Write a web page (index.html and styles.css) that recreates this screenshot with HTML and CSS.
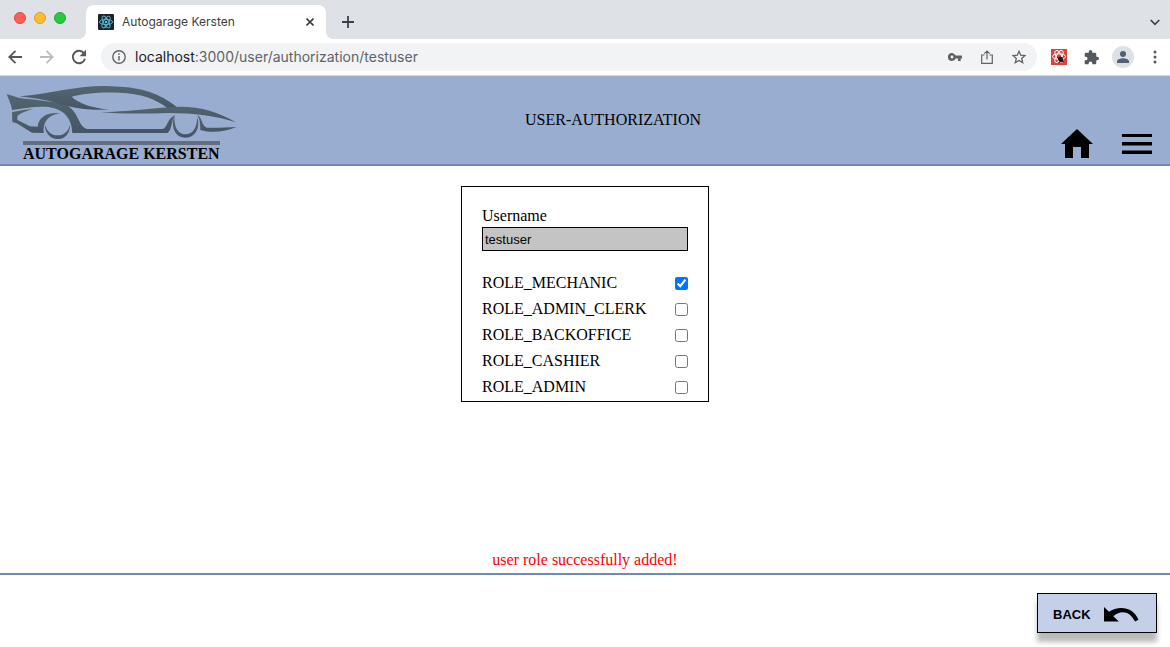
FILE: index.html
```html
<!DOCTYPE html>
<html lang="en">
<head>
<meta charset="utf-8">
<title>Autogarage Kersten</title>
<link rel="stylesheet" href="styles.css">
</head>
<body>
<div class="browser">
  <div class="tabstrip">
    <div class="lights"><span class="light red"></span><span class="light amber"></span><span class="light green"></span></div>
    <div class="tab">
      <svg class="favicon" width="16" height="16" viewBox="0 0 16 16"><rect width="16" height="16" rx="1" fill="#20232a"/><g fill="none" stroke="#53c1de" stroke-width=".9"><ellipse cx="8" cy="8" rx="6.6" ry="2.6"/><ellipse cx="8" cy="8" rx="6.6" ry="2.6" transform="rotate(60 8 8)"/><ellipse cx="8" cy="8" rx="6.6" ry="2.6" transform="rotate(120 8 8)"/></g><circle cx="8" cy="8" r="1.3" fill="#53c1de"/></svg>
      <span class="tab-title">Autogarage Kersten</span>
      <button class="icon-btn" aria-label="Close tab"><svg width="8" height="8" viewBox="0 0 8 8"><path d="M.5.5l7 7M7.500.5l-7 7" stroke="#3c4043" stroke-width="1.6"/></svg></button>
    </div>
    <button class="icon-btn new-tab" aria-label="New tab"><svg width="12" height="12" viewBox="0 0 12 12"><path d="M6 0v12M0 6h12" stroke="#3c4043" stroke-width="1.8"/></svg></button>
    <button class="icon-btn" aria-label="Search tabs"><svg width="10" height="7" viewBox="0 0 10 7"><path d="M.7 1l4.300 4.300L9.300 1" fill="none" stroke="#3c4043" stroke-width="1.7"/></svg></button>
  </div>
  <div class="toolbar">
    <div class="tools nav-buttons">
      <button class="icon-btn" aria-label="Back"><svg width="14" height="14" viewBox="0 0 14 14"><path d="M14 7H1.500M7.500.8L1.300 7l6.200 6.200" fill="none" stroke="#54585d" stroke-width="1.8"/></svg></button>
      <button class="icon-btn" aria-label="Forward"><svg width="14" height="14" viewBox="0 0 14 14"><path d="M0 7h12.500M6.500.8L12.700 7l-6.200 6.200" fill="none" stroke="#babcbe" stroke-width="1.8"/></svg></button>
      <button class="icon-btn" aria-label="Reload"><svg width="16" height="16" viewBox="0 0 16 16"><path d="M13.200 4.500A6.200 6.200 0 1 0 14 9.800" fill="none" stroke="#54585d" stroke-width="1.900"/><path d="M15 .8v6.400H8.600z" fill="#54585d"/></svg></button>
    </div>
    <div class="omnibox">
      <svg width="14" height="14" viewBox="0 0 14 14"><circle cx="7" cy="7" r="6.200" fill="none" stroke="#5f6368" stroke-width="1.400"/><path d="M7 6v4.500M7 3.300v1.500" stroke="#5f6368" stroke-width="1.500"/></svg>
      <div class="url"><span class="host">localhost</span>:3000/user/authorization/testuser</div>
      <div class="tools">
        <button class="icon-btn" aria-label="Passwords"><svg width="14" height="8" viewBox="0 0 14 8"><path fill="#5f6368" fill-rule="evenodd" d="M7.600 2.600A4 4 0 1 0 7.600 5.400H10V8h2.700V5.400H14V2.600zM4 2.600a1.400 1.400 0 1 1 0 2.800 1.400 1.400 0 0 1 0-2.800z"/></svg></button>
        <button class="icon-btn" aria-label="Share"><svg width="12" height="14" viewBox="0 0 12 14"><path d="M3.500 5H.7v8.300h10.600V5H8.500M6 9.500V1.500M3.300 3.700L6 1l2.700 2.700" fill="none" stroke="#5f6368" stroke-width="1.200"/></svg></button>
        <button class="icon-btn" aria-label="Bookmark"><svg width="14" height="14" viewBox="0 0 14 14"><path d="M7 1.300l1.700 3.900 4.200.4-3.200 2.800 1 4.200L7 10.400l-3.700 2.200 1-4.200L1.100 5.600l4.200-.4z" fill="none" stroke="#5f6368" stroke-width="1.300"/></svg></button>
      </div>
    </div>
    <div class="tools extensions">
      <button class="icon-btn" aria-label="React tools"><svg width="16" height="16" viewBox="0 0 16 16"><rect width="16" height="16" fill="#d9453a"/><g fill="none" stroke="#fff" stroke-width="1"><ellipse cx="8" cy="7.500" rx="6.500" ry="2.700"/><ellipse cx="8" cy="7.500" rx="6.500" ry="2.700" transform="rotate(60 8 7.500)"/><ellipse cx="8" cy="7.500" rx="6.500" ry="2.700" transform="rotate(120 8 7.500)"/></g><ellipse cx="9.700" cy="10.500" rx="2.300" ry="3.200" fill="#271715" transform="rotate(-35 9.700 10.500)"/><path d="M6 8l7 5M12 8l-4 6" stroke="#271715" stroke-width=".8"/></svg></button>
      <button class="icon-btn" aria-label="Extensions"><svg width="15" height="15" viewBox="1 1 22 22"><path fill="#54585d" d="M20.500 11H19V7c0-1.100-.9-2-2-2h-4V3.500a2.500 2.500 0 0 0-5 0V5H4c-1.100 0-2 .9-2 2v3.800h1.500a2.700 2.700 0 0 1 0 5.400H2V20c0 1.100.9 2 2 2h3.800v-1.500a2.700 2.700 0 0 1 5.400 0V22H17c1.100 0 2-.9 2-2v-4h1.500a2.500 2.500 0 0 0 0-5z"/></svg></button>
      <button class="icon-btn" aria-label="Profile"><svg width="22" height="22" viewBox="0 0 22 22"><circle cx="11" cy="11" r="11" fill="#dde1e6"/><circle cx="11" cy="8" r="3" fill="#535f75"/><path d="M5 17v-1.500c0-2.200 3.500-3.300 6-3.300s6 1.100 6 3.300V17z" fill="#535f75"/></svg></button>
      <button class="icon-btn" aria-label="Menu"><svg width="4" height="14" viewBox="0 0 4 14"><g fill="#54585d"><circle cx="2" cy="2" r="1.500"/><circle cx="2" cy="7" r="1.500"/><circle cx="2" cy="12" r="1.500"/></g></svg></button>
    </div>
  </div>
</div>

<header class="header">
  <div class="logo">
    <svg class="car" width="245" height="65" viewBox="0 0 735 195">
      <defs><linearGradient id="steel" x1="0" y1="0" x2="0" y2="1"><stop offset="0" stop-color="#53666f"/><stop offset="1" stop-color="#465566"/></linearGradient></defs>
      <g fill="url(#steel)">
        <path d="M20 54L58 66C105 72 160 75 192 85C238 102 230 147 260 159L488 159C502 158 500 128 525 118C513 134 517 160 503 171L217 171C215 130 196 96 135 92C88 92 65 98 36 102C34 84 26 72 20 54Z"/>
        <path d="M36 108C56 106 74 100 98 99C80 105 58 112 52 121L52 132L90 151L113 152C116 123 142 107 180 112C148 116 127 137 131 171L96 170L50 142L37 138Z"/>
        <path d="M135 146C133 165 148 189 173 189C198 189 211 168 210 146C205 166 192 178 173 178C153 178 141 166 135 146Z"/>
        <path d="M58 61C150 54 215 30 320 30L360 32C440 36 490 60 535 96L503 97C470 69 420 52 360 50C300 47 250 52 215 62C232 80 275 96 328 101C250 104 200 91 170 81C130 70 95 66 58 61Z"/>
        <path d="M300 109C385 107 450 98 505 94C590 87 645 104 708 139C645 119 585 111 505 111C440 113 360 114 300 109Z"/>
        <path d="M524 120C511 147 523 185 556 185C590 185 602 149 591 123C592 152 580 175 556 175C534 175 521 153 524 120Z"/>
        <path d="M592 117C608 125 603 147 620 155C645 157 680 153 710 153C675 168 635 172 601 162C601 145 600 131 592 117Z"/>
      </g>
    </svg>
    <strong class="brand">AUTOGARAGE KERSTEN</strong>
  </div>
  <h1 class="title">USER-AUTHORIZATION</h1>
  <nav class="menu">
    <a href="#" aria-label="Home"><svg width="32" height="29" viewBox="0 0 32 29"><path d="M16 0l16 15h-4v14h-8V18h-8v11H4V15H0z"/></svg></a>
    <button class="icon-btn" aria-label="Open menu"><svg width="30" height="20" viewBox="0 0 30 20"><path d="M0 0h30v3H0zM0 8h30v3.500H0zM0 16.500h30V20H0z"/></svg></button>
  </nav>
</header>

<main class="main">
  <form class="card">
    <label class="label" for="username">Username</label>
    <input class="username" id="username" type="text" value="testuser" readonly>
    <div class="role"><label for="r1">ROLE_MECHANIC</label><input id="r1" type="checkbox" checked></div>
    <div class="role"><label for="r2">ROLE_ADMIN_CLERK</label><input id="r2" type="checkbox"></div>
    <div class="role"><label for="r3">ROLE_BACKOFFICE</label><input id="r3" type="checkbox"></div>
    <div class="role"><label for="r4">ROLE_CASHIER</label><input id="r4" type="checkbox"></div>
    <div class="role"><label for="r5">ROLE_ADMIN</label><input id="r5" type="checkbox"></div>
  </form>
  <p class="message">user role successfully added!</p>
</main>

<footer class="footer">
  <button class="back">BACK <svg width="35" height="15" viewBox="0 0 35 15" aria-hidden="true"><path d="M0 0L5 4.800C14-1.500 29-1 34.500 12.800L31 14.500C26 4 17 2.500 9.300 9.200L14.800 14.500H0z"/></svg></button>
</footer>
</body>
</html>
```

FILE: styles.css
```css
* { box-sizing: border-box; }
body {
  margin: 0;
  min-height: 100vh;
  display: flex;
  flex-direction: column;
  background: #fff;
  color: #000;
  font: 16px/18px "Liberation Serif", serif;
}
svg { display: block; flex: none; }
.icon-btn { padding: 0; border: 0; background: none; flex: none; }

/* browser window */
.browser { border-bottom: 1px solid #d8dadd; }
.tabstrip {
  height: 39px;
  display: flex;
  align-items: center;
  padding: 5px 10px 0 14px;
  background: #dee1e6;
}
.lights { display: flex; gap: 8px; width: 72px; padding-bottom: 8px; }
.light { width: 12px; height: 12px; border-radius: 50%; border: 1px solid; }
.red { background: #ff5f57; border-color: #e2463f; }
.amber { background: #febc2e; border-color: #dfa023; }
.green { background: #28c840; border-color: #1eab2c; }
.tab {
  position: relative;
  width: 240px;
  height: 34px;
  display: flex;
  align-items: center;
  gap: 8px;
  padding: 0 12px;
  background: #fff;
  border-radius: 8px 8px 0 0;
}
.tab::before, .tab::after {
  content: "";
  position: absolute;
  bottom: 0;
  width: 8px;
  height: 8px;
}
.tab::before { left: -8px; background: radial-gradient(circle at 0 0, #dee1e6 8px, #fff 8px); }
.tab::after { right: -8px; background: radial-gradient(circle at 100% 0, #dee1e6 8px, #fff 8px); }
.tab-title { flex: 1; font: 12px/16px Inter, sans-serif; color: #3c4043; }
.new-tab { margin: 0 auto 0 16px; }
.toolbar {
  height: 36px;
  display: flex;
  align-items: center;
  padding: 0 4px;
  background: #fff;
}
.tools { display: flex; align-items: center; gap: 10px; }
.tools .icon-btn { width: 22px; height: 22px; display: grid; place-items: center; }
.nav-buttons { width: 97px; }
.omnibox {
  flex: 1;
  height: 28px;
  display: flex;
  align-items: center;
  gap: 9px;
  padding: 0 7px 0 11px;
  border-radius: 14px;
  background: #f1f3f4;
}
.url { flex: 1; font: 14px/20px Inter, sans-serif; color: #5f6368; }
.host { color: #202124; }
.extensions { padding-left: 11px; }

/* page header */
.header {
  height: 90px;
  display: grid;
  grid-template-columns: 245px 1fr 189px;
  background: #99add1;
  border-bottom: 2px solid #7089bb;
}
.logo { display: flex; flex-direction: column; align-items: flex-start; }
.brand { margin-left: 23px; border-top: 4px solid #636f7e; white-space: nowrap; }
.title { margin: 0; align-self: center; text-align: center; font-size: 16px; font-weight: 400; }
.menu {
  display: flex;
  align-items: center;
  align-self: end;
  justify-content: flex-end;
  gap: 29px;
  padding: 0 18px 6px 0;
}

/* content */
.main { flex: 1; display: flex; flex-direction: column; align-items: center; padding: 20px 0 4px; }
.card {
  width: 248px;
  display: flex;
  flex-direction: column;
  padding: 20px 20px 1px;
  border: 1px solid #000;
}
.label { line-height: 18px; margin-bottom: 2px; }
.username {
  height: 24px;
  margin: 0 0 19px;
  padding: 1px 2px;
  border: 1px solid #000;
  border-radius: 0;
  background: #c4c4c4;
  color: #000;
  font: 13px "Liberation Sans", sans-serif;
}
.role { height: 26px; display: flex; align-items: center; justify-content: space-between; }
.role input { width: 13px; height: 13px; margin: 0; }
.message { margin: auto 0 0; color: #f00; }

/* page footer */
.footer {
  display: flex;
  justify-content: flex-end;
  padding: 18px 13px 14px;
  border-top: 2px solid #7089bb;
}
.back {
  width: 120px;
  height: 40px;
  display: flex;
  align-items: center;
  gap: 13px;
  padding: 2px 0 0 15px;
  border: 1px solid #000;
  background: #c4d0e8;
  box-shadow: 0 9px 5px rgba(0, 0, 0, 0.27);
  color: #000;
  font: bold 13px "Liberation Sans", sans-serif;
}
```
